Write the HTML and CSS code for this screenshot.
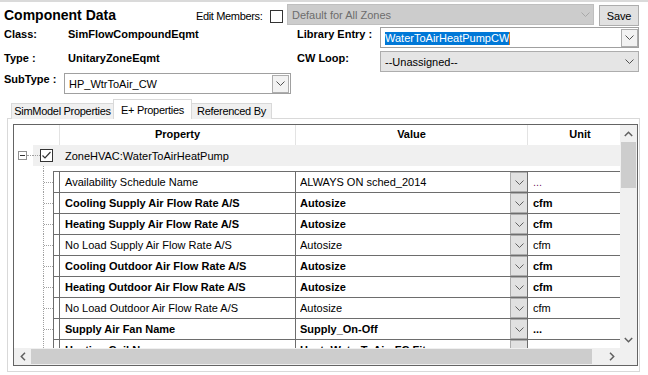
FILE: index.html
```html
<!DOCTYPE html>
<html>
<head>
<meta charset="utf-8">
<link rel="stylesheet" href="styles.css">
</head>
<body>
<div class="topbar"></div>
<div class="form">
  <div class="line l1">
    <div class="title">Component Data</div>
    <div class="edit-label">Edit Members:</div>
    <div class="chk"></div>
    <div class="combo disabled w-def">
      <span class="ctext">Default for All Zones</span>
      <svg class="chev" width="9" height="5" viewBox="0 0 9 5"><polyline points="0.5,0.5 4.5,4.5 8.5,0.5" fill="none" stroke="#a8a8a8"/></svg>
    </div>
    <div class="save">Save</div>
  </div>
  <div class="line l2">
    <div class="lbl c1">Class:</div>
    <div class="lbl c2">SimFlowCompoundEqmt</div>
    <div class="lbl c3">Library Entry :</div>
    <div class="combo edit w-lib">
      <span class="ctext"><span class="sel">WaterToAirHeatPumpCW</span></span>
      <span class="dbtn"><svg width="9" height="5" viewBox="0 0 9 5"><polyline points="0.5,0.5 4.5,4.5 8.5,0.5" fill="none" stroke="#505050"/></svg></span>
    </div>
  </div>
  <div class="line l3">
    <div class="lbl c1">Type :</div>
    <div class="lbl c2">UnitaryZoneEqmt</div>
    <div class="lbl c3">CW Loop:</div>
    <div class="combo list w-lib">
      <span class="ctext">--Unassigned--</span>
      <svg class="chev" width="9" height="5" viewBox="0 0 9 5"><polyline points="0.5,0.5 4.5,4.5 8.5,0.5" fill="none" stroke="#505050"/></svg>
    </div>
  </div>
  <div class="line l4">
    <div class="lbl c4">SubType :</div>
    <div class="combo edit w-sub">
      <span class="ctext">HP_WtrToAir_CW</span>
      <span class="dbtn"><svg width="9" height="5" viewBox="0 0 9 5"><polyline points="0.5,0.5 4.5,4.5 8.5,0.5" fill="none" stroke="#505050"/></svg></span>
    </div>
  </div>
</div>

<div class="tabs">
  <div class="tab t1">SimModel Properties</div>
  <div class="tab active t2">E+ Properties</div>
  <div class="tab t3">Referenced By</div>
</div>
<div class="panel">
  <div class="grid">
    <div class="gmain">
      <div class="gview">
        <div class="ghead">
          <div class="h h0"></div>
          <div class="h hp">Property</div>
          <div class="h hv">Value</div>
          <div class="h hu">Unit</div>
        </div>
        <div class="group">
          <div class="minus"><span></span></div>
          <div class="gdot"></div>
          <div class="gbody">
            <div class="gdot2"></div>
            <div class="gchk"><svg width="11" height="11" viewBox="0 0 11 11"><polyline points="1.5,5.5 4,8 9.5,2" fill="none" stroke="#333" stroke-width="1.2"/></svg></div>
            <div class="gtext">ZoneHVAC:WaterToAirHeatPump</div>
          </div>
        </div>
        <div class="gap"><div class="tree"><div class="tv"></div></div></div>

        <div class="row">
          <div class="tree"><div class="tv"><div class="th"></div></div></div>
          <div class="cells">
            <div class="rh"></div>
            <div class="prop">Availability Schedule Name</div>
            <div class="val"><span class="vt">ALWAYS ON sched_2014</span><span class="vb"><svg width="9" height="5" viewBox="0 0 9 5"><polyline points="0.5,0.5 4.5,4.5 8.5,0.5" fill="none" stroke="#606060"/></svg></span></div>
            <div class="unit purple">...</div>
          </div>
        </div>
        <div class="row b">
          <div class="tree"><div class="tv"><div class="th"></div></div></div>
          <div class="cells">
            <div class="rh"></div>
            <div class="prop">Cooling Supply Air Flow Rate A/S</div>
            <div class="val"><span class="vt">Autosize</span><span class="vb"><svg width="9" height="5" viewBox="0 0 9 5"><polyline points="0.5,0.5 4.5,4.5 8.5,0.5" fill="none" stroke="#606060"/></svg></span></div>
            <div class="unit">cfm</div>
          </div>
        </div>
        <div class="row b">
          <div class="tree"><div class="tv"><div class="th"></div></div></div>
          <div class="cells">
            <div class="rh"></div>
            <div class="prop">Heating Supply Air Flow Rate A/S</div>
            <div class="val"><span class="vt">Autosize</span><span class="vb"><svg width="9" height="5" viewBox="0 0 9 5"><polyline points="0.5,0.5 4.5,4.5 8.5,0.5" fill="none" stroke="#606060"/></svg></span></div>
            <div class="unit">cfm</div>
          </div>
        </div>
        <div class="row">
          <div class="tree"><div class="tv"><div class="th"></div></div></div>
          <div class="cells">
            <div class="rh"></div>
            <div class="prop">No Load Supply Air Flow Rate A/S</div>
            <div class="val"><span class="vt">Autosize</span><span class="vb"><svg width="9" height="5" viewBox="0 0 9 5"><polyline points="0.5,0.5 4.5,4.5 8.5,0.5" fill="none" stroke="#606060"/></svg></span></div>
            <div class="unit">cfm</div>
          </div>
        </div>
        <div class="row b">
          <div class="tree"><div class="tv"><div class="th"></div></div></div>
          <div class="cells">
            <div class="rh"></div>
            <div class="prop">Cooling Outdoor Air Flow Rate A/S</div>
            <div class="val"><span class="vt">Autosize</span><span class="vb"><svg width="9" height="5" viewBox="0 0 9 5"><polyline points="0.5,0.5 4.5,4.5 8.5,0.5" fill="none" stroke="#606060"/></svg></span></div>
            <div class="unit">cfm</div>
          </div>
        </div>
        <div class="row b">
          <div class="tree"><div class="tv"><div class="th"></div></div></div>
          <div class="cells">
            <div class="rh"></div>
            <div class="prop">Heating Outdoor Air Flow Rate A/S</div>
            <div class="val"><span class="vt">Autosize</span><span class="vb"><svg width="9" height="5" viewBox="0 0 9 5"><polyline points="0.5,0.5 4.5,4.5 8.5,0.5" fill="none" stroke="#606060"/></svg></span></div>
            <div class="unit">cfm</div>
          </div>
        </div>
        <div class="row">
          <div class="tree"><div class="tv"><div class="th"></div></div></div>
          <div class="cells">
            <div class="rh"></div>
            <div class="prop">No Load Outdoor Air Flow Rate A/S</div>
            <div class="val"><span class="vt">Autosize</span><span class="vb"><svg width="9" height="5" viewBox="0 0 9 5"><polyline points="0.5,0.5 4.5,4.5 8.5,0.5" fill="none" stroke="#606060"/></svg></span></div>
            <div class="unit">cfm</div>
          </div>
        </div>
        <div class="row b">
          <div class="tree"><div class="tv"><div class="th"></div></div></div>
          <div class="cells">
            <div class="rh"></div>
            <div class="prop">Supply Air Fan Name</div>
            <div class="val"><span class="vt">Supply_On-Off</span><span class="vb"><svg width="9" height="5" viewBox="0 0 9 5"><polyline points="0.5,0.5 4.5,4.5 8.5,0.5" fill="none" stroke="#606060"/></svg></span></div>
            <div class="unit">...</div>
          </div>
        </div>
        <div class="row b">
          <div class="tree"><div class="tv"><div class="th"></div></div></div>
          <div class="cells">
            <div class="rh"></div>
            <div class="prop">Heating Coil Name</div>
            <div class="val"><span class="vt">HeatgWaterToAir_FC Fit</span><span class="vb"><svg width="9" height="5" viewBox="0 0 9 5"><polyline points="0.5,0.5 4.5,4.5 8.5,0.5" fill="none" stroke="#606060"/></svg></span></div>
            <div class="unit">...</div>
          </div>
        </div>
      </div>
      <div class="vscroll">
        <div class="sbtn"><svg width="9" height="6" viewBox="0 0 9 6"><polyline points="0.8,5 4.5,1.3 8.2,5" fill="none" stroke="#606060" stroke-width="1.5"/></svg></div>
        <div class="vthumb"></div>
        <div class="vspace"></div>
        <div class="sbtn"><svg width="9" height="6" viewBox="0 0 9 6"><polyline points="0.8,1 4.5,4.7 8.2,1" fill="none" stroke="#606060" stroke-width="1.5"/></svg></div>
      </div>
    </div>
    <div class="hrow">
      <div class="hscroll">
        <div class="hbtn"><svg width="6" height="9" viewBox="0 0 6 9"><polyline points="5,0.8 1.3,4.5 5,8.2" fill="none" stroke="#606060" stroke-width="1.5"/></svg></div>
        <div class="hthumb"></div>
        <div class="hspace"></div>
        <div class="hbtn"><svg width="6" height="9" viewBox="0 0 6 9"><polyline points="1,0.8 4.7,4.5 1,8.2" fill="none" stroke="#606060" stroke-width="1.5"/></svg></div>
      </div>
      <div class="corner"></div>
    </div>
  </div>
</div>
</body>
</html>
```

FILE: styles.css
```css
* { box-sizing: border-box; margin: 0; padding: 0; }
body {
  width: 648px;
  height: 375px;
  overflow: hidden;
  background: #fff;
  font-family: "Liberation Sans", Arial, sans-serif;
  font-size: 11px;
  color: #000;
}
.topbar { height: 2px; background: #dadada; }
.form { padding-left: 4px; }
.line { display: flex; height: 21px; }
.l1 { margin-top: 2px; }
.l2 { margin-top: 2px; }
.l3 { margin-top: 3px; }
.l4 { margin-top: 1px; }

.title {
  width: 192px;
  font-size: 14px;
  font-weight: bold;
  line-height: 16px;
  padding-top: 3px;
}
.edit-label {
  width: 74px;
  line-height: 13px;
  margin-top: 6px;
  letter-spacing: -0.35px;
}
.chk {
  width: 13px;
  height: 13px;
  margin-top: 6px;
  margin-right: 4px;
  border: 1px solid #333;
  background: #fff;
}
.combo {
  display: flex;
  align-items: center;
  height: 21px;
  border: 1px solid #adadad;
  padding-left: 4px;
}
.ctext { flex: 1; line-height: 19px; padding-top: 1px; white-space: nowrap; overflow: hidden; }
.disabled { width: 307px; background: #cccccc; border-color: #bfbfbf; color: #6d6d6d; }
.disabled .chev { margin-right: 3px; }
.list { background: #e5e5e5; }
.list .chev { margin-right: 4px; }
.edit { background: #fff; border-color: #a0a0a0; }
.w-lib { width: 259px; }
.w-sub { width: 227px; }
.sel {
  display: inline-block;
  background: #0078d7;
  color: #fff;
  line-height: 13px;
  padding: 0 0 0 1px;
  border-right: 1px solid #e07a1f;
  margin-left: -1px;
}
.dbtn {
  width: 17px;
  height: 18px;
  border: 1px solid #adadad;
  background: #f2f2f2;
  display: flex;
  align-items: center;
  justify-content: center;
}
.w-sub .dbtn { margin-right: 1px; }
.save {
  width: 40px;
  height: 21px;
  margin-left: 5px;
  margin-top: 1px;
  border: 1px solid #adadad;
  background: #e1e1e1;
  text-align: center;
  line-height: 18px;
  padding-top: 1px;
  letter-spacing: -0.2px;
}
.lbl { font-weight: bold; line-height: 13px; padding-top: 1px; white-space: nowrap; }
.c1 { width: 64px; }
.c2 { width: 229px; }
.c3 { width: 83px; }
.c4 { width: 60px; padding-top: 0; }

/* tabs */
.tabs {
  display: flex;
  align-items: flex-end;
  height: 20px;
  margin-top: 5px;
  padding-left: 11px;
}
.tab {
  height: 16px;
  border: 1px solid #d9d9d9;
  border-bottom: none;
  background: #f0f0f0;
  text-align: center;
  line-height: 14px;
  letter-spacing: -0.3px;
  white-space: nowrap;
}
.t1 { width: 103px; }
.t2 { width: 79px; margin-left: -1px; }
.t3 { width: 81px; margin-left: -1px; }
.tab.active {
  height: 20px;
  background: #fff;
  padding-top: 3px;
  position: relative;
  z-index: 1;
}
.panel {
  width: 633px;
  height: 254px;
  margin-top: -1px;
  margin-left: 7px;
  border: 1px solid #d9d9d9;
  padding: 5px 0 0 5px;
  background: #fff;
}
.grid {
  width: 625px;
  height: 242px;
  border: 1px solid #646464;
  display: flex;
  flex-direction: column;
  background: #fff;
}
.gmain { display: flex; height: 223px; }
.gview { width: 606px; height: 223px; overflow: hidden; }

.ghead { display: flex; height: 20px; }
.h { font-weight: bold; text-align: center; line-height: 19px; padding-top: 0; }
.h0 { width: 45px; }
.hp { width: 236px; border-left: 1px solid #e3e3e3; }
.hv { width: 232px; border-left: 1px solid #e3e3e3; }
.hu { width: 93px; border-left: 1px solid #e3e3e3; padding-left: 12px; }

.group { display: flex; height: 21px; align-items: center; }
.minus {
  width: 9px;
  height: 9px;
  margin-left: 4px;
  border: 1px solid #919191;
  display: flex;
  align-items: center;
  justify-content: center;
  background: #fff;
}
.minus span { width: 5px; height: 1px; background: #333; }
.gdot { width: 6px; border-top: 1px dotted #a0a0a0; }
.gbody {
  flex: 1;
  height: 21px;
  background: #f0f0f0;
  display: flex;
  align-items: center;
}
.gdot2 { width: 7px; border-top: 1px dotted #a0a0a0; }
.gchk {
  width: 13px;
  height: 13px;
  border: 1px solid #333;
  background: #fff;
  display: flex;
}
.gtext { margin-left: 12px; line-height: 19px; padding-top: 2px; }

.gap { height: 5px; display: flex; }
.tree { width: 39px; display: flex; height: 100%; }
.tv {
  margin-left: 29px;
  width: 10px;
  height: 100%;
  border-left: 1px dotted #a0a0a0;
  display: flex;
  align-items: center;
}
.th { width: 9px; border-top: 1px dotted #a0a0a0; margin-top: 1px; }

.row { display: flex; height: 21px; }
.cells {
  display: flex;
  width: 567px;
  border-top: 1px solid #6d6d6d;
}
.cells > div { border-left: 1px solid #6d6d6d; height: 20px; line-height: 20px; white-space: nowrap; overflow: hidden; }
.rh { width: 6px; }
.prop { width: 236px; padding-left: 5px; }
.val { width: 232px; padding-left: 4px; display: flex; }
.vt { flex: 1; overflow: hidden; }
.vb {
  width: 17px;
  height: 20px;
  background: #e1e1e1;
  border: 1px solid #adadad;
  border-right: none;
  display: flex;
  align-items: center;
  justify-content: center;
}
.unit { width: 93px; padding-left: 5px; }
.purple { color: #7a1a6a; }
.row.b .prop, .row.b .vt, .row.b .unit { font-weight: bold; }

.vscroll {
  width: 17px;
  height: 223px;
  background: #f0f0f0;
  display: flex;
  flex-direction: column;
}
.sbtn { height: 17px; display: flex; align-items: center; justify-content: center; }
.vthumb { height: 46px; margin: 0 1px 0 1px; background: #cdcdcd; }
.vspace { flex: 1; }

.hrow { display: flex; height: 17px; }
.hscroll { width: 606px; display: flex; background: #f0f0f0; }
.hbtn { width: 17px; display: flex; align-items: center; justify-content: center; }
.hthumb { width: 561px; margin: 1px 0; background: #cdcdcd; }
.hspace { flex: 1; }
.corner { width: 17px; background: #f0f0f0; }
```
